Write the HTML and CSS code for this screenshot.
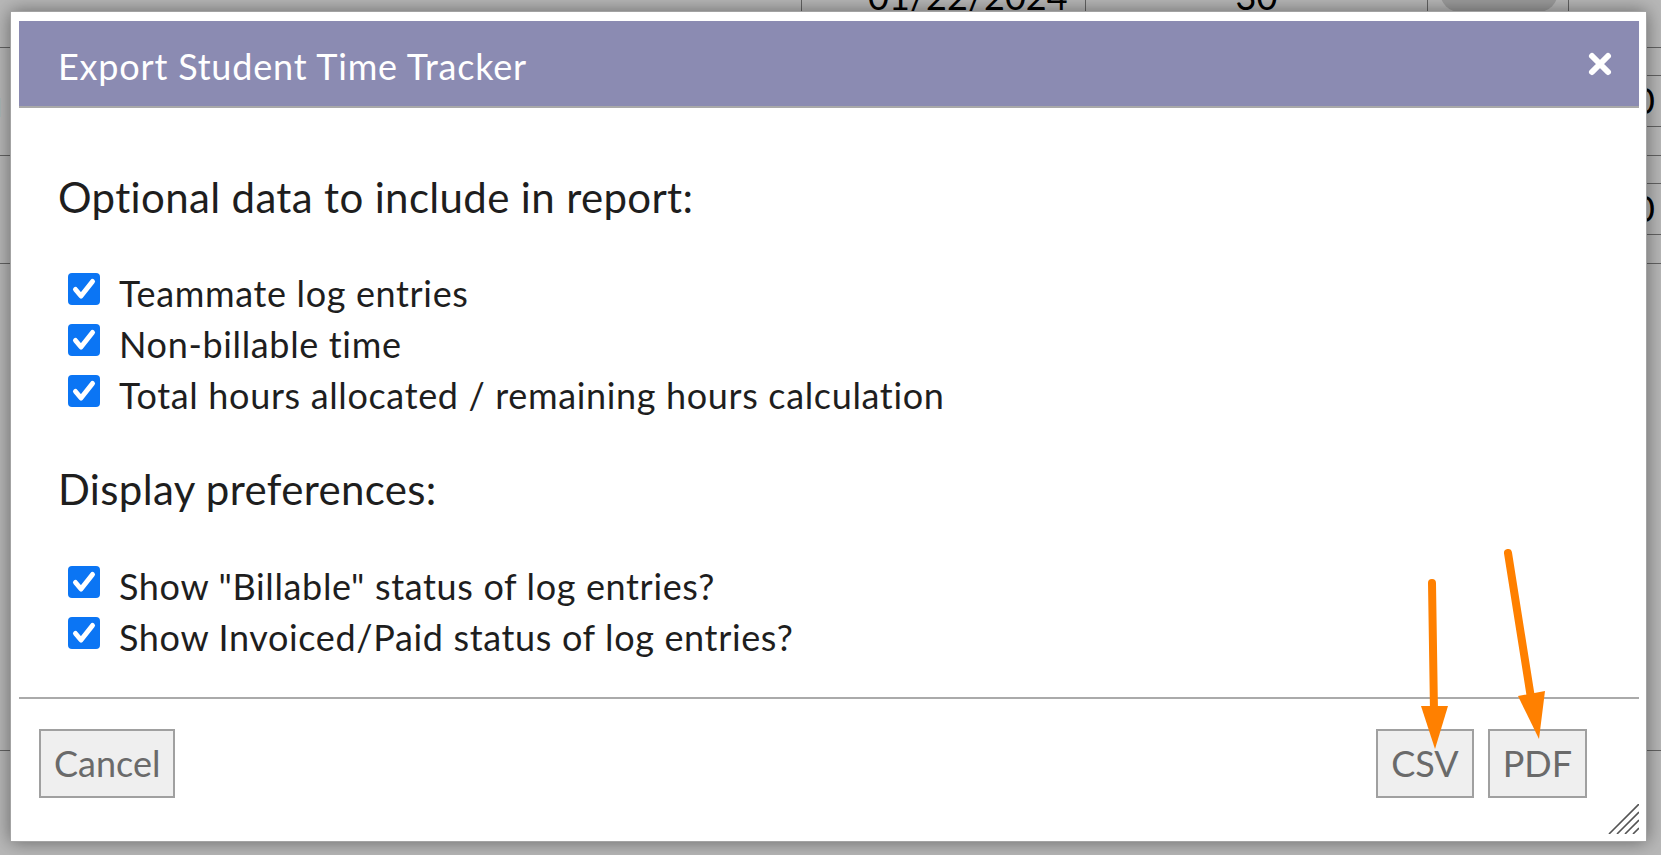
FILE: index.html
```html
<!DOCTYPE html>
<html lang="en">
<head>
<meta charset="utf-8">
<title>Export Student Time Tracker</title>
<link rel="stylesheet" href="styles.css">
</head>
<body>
<div class="page">
  <div class="bg-row bg-r0">
    <div class="bg-cell c-a"></div>
    <div class="bg-cell c-b"><span class="bg-text">01/22/2024</span></div>
    <div class="bg-cell c-c"><span class="bg-text">30</span></div>
    <div class="bg-cell c-d"><span class="bg-pill"></span></div>
    <div class="bg-cell c-e"></div>
  </div>
  <div class="bg-row bg-r1">
    <span class="bg-frag">nu</span>
    <span class="bg-input"><span class="bg-text">0</span></span>
  </div>
  <div class="bg-row bg-r2">
    <span class="bg-frag"></span>
    <span class="bg-input"><span class="bg-text">0</span></span>
  </div>
  <div class="bg-row bg-r3"></div>
  <div class="bg-row bg-r4"></div>
</div>
<div class="overlay"></div>

<div class="dialog" role="dialog" aria-labelledby="dlg-title">
  <div class="titlebar">
    <span class="title" id="dlg-title">Export Student Time Tracker</span>
    <button class="close" aria-label="Close">
      <svg width="26" height="26" viewBox="0 0 26 26"><path d="M5 5 L21 21 M21 5 L5 21" stroke="#fff" stroke-width="6" stroke-linecap="round" fill="none"/></svg>
    </button>
  </div>

  <div class="content">
    <h2 class="section">Optional data to include in report:</h2>
    <div class="option"><span class="cb"><svg width="32" height="32" viewBox="0 0 32 32"><rect x="0" y="0" width="32" height="32" rx="4" fill="#0b75f4"/><polyline points="7.5,16.5 13,23 24.5,8.5" fill="none" stroke="#fff" stroke-width="5" stroke-linecap="round" stroke-linejoin="round"/></svg></span>Teammate log entries</div>
    <div class="option"><span class="cb"><svg width="32" height="32" viewBox="0 0 32 32"><rect x="0" y="0" width="32" height="32" rx="4" fill="#0b75f4"/><polyline points="7.5,16.5 13,23 24.5,8.5" fill="none" stroke="#fff" stroke-width="5" stroke-linecap="round" stroke-linejoin="round"/></svg></span>Non-billable time</div>
    <div class="option"><span class="cb"><svg width="32" height="32" viewBox="0 0 32 32"><rect x="0" y="0" width="32" height="32" rx="4" fill="#0b75f4"/><polyline points="7.5,16.5 13,23 24.5,8.5" fill="none" stroke="#fff" stroke-width="5" stroke-linecap="round" stroke-linejoin="round"/></svg></span>Total hours allocated / remaining hours calculation</div>

    <h2 class="section">Display preferences:</h2>
    <div class="option"><span class="cb"><svg width="32" height="32" viewBox="0 0 32 32"><rect x="0" y="0" width="32" height="32" rx="4" fill="#0b75f4"/><polyline points="7.5,16.5 13,23 24.5,8.5" fill="none" stroke="#fff" stroke-width="5" stroke-linecap="round" stroke-linejoin="round"/></svg></span>Show "Billable" status of log entries?</div>
    <div class="option"><span class="cb"><svg width="32" height="32" viewBox="0 0 32 32"><rect x="0" y="0" width="32" height="32" rx="4" fill="#0b75f4"/><polyline points="7.5,16.5 13,23 24.5,8.5" fill="none" stroke="#fff" stroke-width="5" stroke-linecap="round" stroke-linejoin="round"/></svg></span>Show Invoiced/Paid status of log entries?</div>
  </div>

  <div class="footer">
    <button class="btn">Cancel</button>
    <div class="btn-set">
      <button class="btn">CSV</button>
      <button class="btn">PDF</button>
    </div>
  </div>

  <svg class="resizer" width="31" height="30" viewBox="0 0 31 30">
    <path d="M1 30 L31 0 M9 30 L31 8 M17 30 L31 16 M25 30 L31 24" stroke="#555" stroke-width="1.6" fill="none"/>
  </svg>
</div>

<svg class="annot" width="1661" height="855" viewBox="0 0 1661 855">
  <g stroke="#ff8000" stroke-width="8" stroke-linecap="round" fill="#ff8000">
    <line x1="1432" y1="583" x2="1434" y2="712"/>
    <line x1="1508" y1="553" x2="1531" y2="698"/>
  </g>
  <g fill="#ff8000" stroke="none">
    <polygon points="1421,706 1448,706 1435,749"/>
    <polygon points="1518,696 1545,691 1539,739"/>
  </g>
</svg>
</body>
</html>
```

FILE: styles.css
```css
html, body {
  margin: 0;
  padding: 0;
}

body {
  width: 1661px;
  height: 855px;
  overflow: hidden;
  position: relative;
  background: #ffffff;
  font-family: "Lato", "Open Sans", sans-serif;
  color: #1e1e1e;
}

/* ---------- page behind the modal ---------- */
.page {
  display: flex;
  flex-direction: column;
}

.bg-row {
  display: flex;
  border-bottom: 1px solid #8a8a8a;
  box-sizing: border-box;
}

.bg-r0 { height: 48px; overflow: hidden; }
.bg-r1, .bg-r2 { height: 108px; justify-content: space-between; }
.bg-r3 { height: 487px; }
.bg-r4 { height: 104px; border-bottom: none; }

.bg-cell {
  height: 48px;
  box-sizing: border-box;
}
.c-a { width: 802px; border-right: 1px solid #8a8a8a; }
.c-b { width: 284px; padding-left: 66px; border-right: 1px solid #8a8a8a; }
.c-c { width: 342px; display: flex; justify-content: center; border-right: 1px solid #8a8a8a; }
.c-d { width: 141px; padding-left: 12px; border-right: 1px solid #8a8a8a; }
.c-e { flex: 1; }

.bg-text {
  display: block;
  font-size: 36px;
  line-height: 43px;
  margin-top: -25px;
  color: #000;
}

.bg-pill {
  display: block;
  width: 118px;
  height: 40px;
  margin-top: -28px;
  border-radius: 20px;
  background: #d9d9d9;
}

.bg-frag {
  font-size: 36px;
  line-height: 43px;
  margin: 34px 0 0 -38px;
  color: #000;
}

.bg-input {
  width: 60px;
  height: 52px;
  margin-top: 27px;
  box-sizing: border-box;
  border-top: 1px solid #8a8a8a;
  border-bottom: 1px solid #8a8a8a;
  overflow: hidden;
  display: flex;
  justify-content: flex-end;
}
.bg-input .bg-text {
  margin-top: 3px;
  margin-right: 6px;
}

.overlay {
  position: absolute;
  inset: 0;
  background: rgba(0, 0, 0, 0.28);
}

/* ---------- dialog ---------- */
.dialog {
  position: absolute;
  left: 10px;
  top: 11px;
  width: 1637px;
  height: 831px;
  box-sizing: border-box;
  border: 1px solid #a3a3a3;
  background: #fff;
  padding: 9px 7px 0 8px;
  display: flex;
  flex-direction: column;
  box-shadow: 0 0 18px rgba(0, 0, 0, 0.45);
}

.titlebar {
  height: 87px;
  box-sizing: border-box;
  flex: none;
  background: #8b8bb2;
  border-bottom: 2px solid #a9a9a9;
  display: flex;
  align-items: center;
  justify-content: space-between;
  padding: 5px 26px 0 39px;
}

.title {
  font-size: 36px;
  line-height: 43px;
  letter-spacing: 0.8px;
  color: #fff;
}

.close {
  border: none;
  background: transparent;
  padding: 0;
  margin-top: -4px;
  width: 26px;
  height: 26px;
  display: flex;
}

.content {
  flex: 1;
  padding: 21px 0 0 39px;
}

.section {
  font-size: 42px;
  font-weight: 400;
  line-height: 1.2;
  letter-spacing: 0.35px;
  margin: 43px 0 46px;
  color: #1e1e1e;
}

.option {
  display: flex;
  align-items: flex-start;
  height: 51px;
  font-size: 36px;
  line-height: 51px;
  letter-spacing: 0.65px;
  color: #1e1e1e;
}

.cb {
  flex: none;
  width: 32px;
  height: 32px;
  margin: 5px 19px 0 10px;
  display: flex;
}

.footer {
  flex: none;
  border-top: 2px solid #aaaaaa;
  padding: 30px 52px 43px 20px;
  display: flex;
  justify-content: space-between;
  align-items: flex-start;
}

.btn-set {
  display: flex;
  gap: 14px;
}

.btn {
  height: 69px;
  box-sizing: border-box;
  border: 2px solid #a0a0a0;
  background: #efefef;
  color: #6a6a6a;
  font-family: "Lato", "Open Sans", sans-serif;
  font-size: 36px;
  line-height: 43px;
  padding: 0 13px;
  margin: 0;
}

.resizer {
  position: absolute;
  right: 7px;
  bottom: 7px;
}

/* ---------- annotation arrows ---------- */
.annot {
  position: absolute;
  left: 0;
  top: 0;
  pointer-events: none;
}
```
